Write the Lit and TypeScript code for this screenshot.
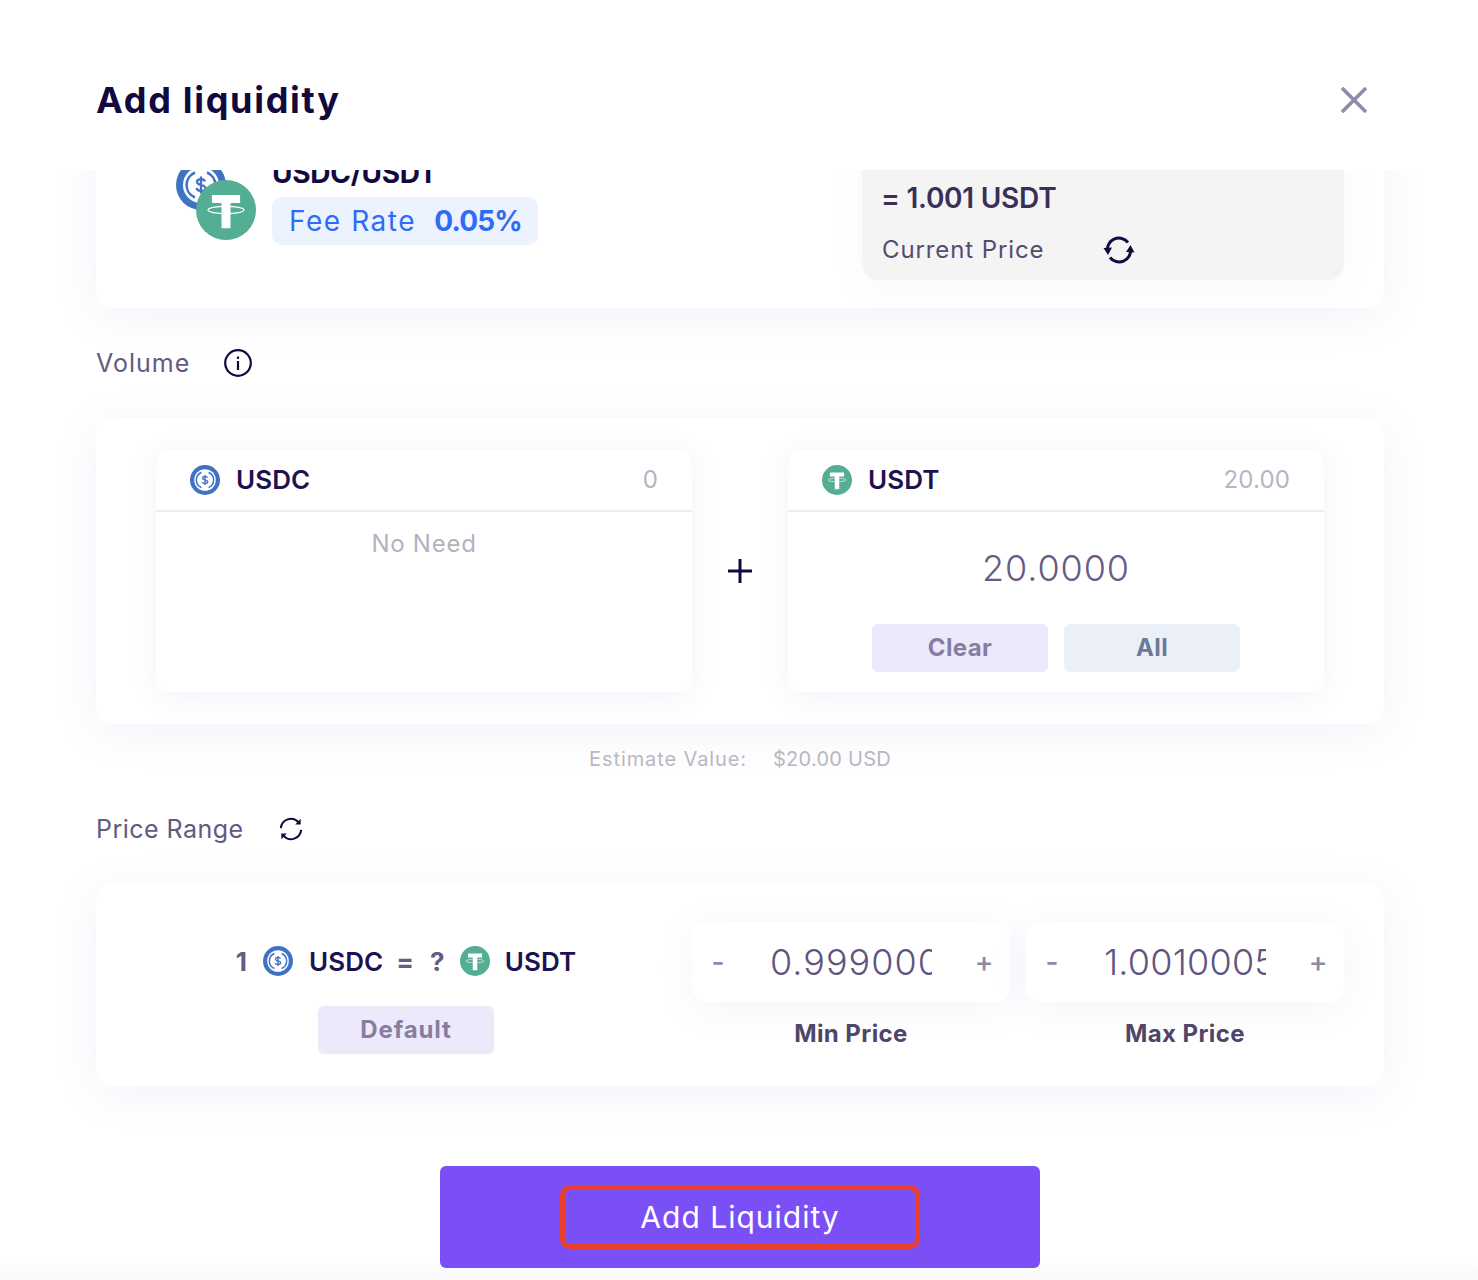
import { LitElement, html, css, svg } from "lit";
import { customElement } from "lit/decorators.js";

const usdc = (size: number) => html`<svg class="logo" width=${size} height=${size} viewBox="0 0 100 100">
  <circle cx="50" cy="50" r="50" fill="#3e73c4"/>
  <circle cx="50" cy="50" r="36" fill="#fff"/>
  <path d="M38 25 A27 27 0 0 0 38 75 M62 25 A27 27 0 0 1 62 75" fill="none" stroke="#3e73c4" stroke-width="5"/>
  <path d="M58 43 C57 39 54 38 50 38 C45 38 42 40 42 44 C42 52 59 48 59 56 C59 60 55 62 50 62 C45 62 42 60 41 56 M50 33 V67" fill="none" stroke="#3e73c4" stroke-width="4.500"/>
</svg>`;

const usdt = (size: number) => html`<svg class="logo" width=${size} height=${size} viewBox="0 0 100 100">
  <circle cx="50" cy="50" r="50" fill="#53ae94"/>
  <path d="M26.500 25 H73.500 V38.500 H57.500 V80.500 H42.500 V38.500 H26.500 Z" fill="#fff"/>
  <ellipse cx="50" cy="50" rx="30" ry="6" fill="none" stroke="#fff" stroke-width="2"/>
</svg>`;

const refreshThick = svg`<svg width="32" height="30" viewBox="0 0 32 30">
  <path d="M4.500 16 A11.500 11.500 0 0 1 25 7.500 M27.500 14 A11.500 11.500 0 0 1 7 22.500" fill="none" stroke="#120a3e" stroke-width="3"/>
  <path d="M0.500 13 L9 12.500 L5 20 Z M23 17 L31.500 17.500 L27.500 10 Z" fill="#120a3e"/>
</svg>`;

const refreshThin = svg`<svg width="24" height="24" viewBox="0 0 26 26">
  <path d="M2 12 A11 11 0 0 1 21 5.500 M24 14 A11 11 0 0 1 5 20.500" fill="none" stroke="#120a3e" stroke-width="2.200"/>
  <path d="M23.500 2 V8 H17.500 Z M2.500 24 V18 H8.500 Z" fill="#120a3e"/>
</svg>`;

const info = svg`<svg width="28" height="28" viewBox="0 0 28 28">
  <circle cx="14" cy="14" r="12.800" fill="none" stroke="#120a3e" stroke-width="2.200"/>
  <rect x="12.900" y="12" width="2.200" height="9" fill="#120a3e"/>
  <rect x="12.900" y="7.500" width="2.200" height="2.400" fill="#120a3e"/>
</svg>`;

@customElement("app-root")
export class AppRoot extends LitElement {
  static styles = css`
    :host {
      display: flex;
      flex-direction: column;
      height: 1280px;
      overflow: hidden;
      font-family: Inter, "Noto Sans", sans-serif;
      background: linear-gradient(to bottom, #fff calc(100% - 22px), #f8f8f8);
      color: #120a3e;
    }
    .logo { display: block; flex: none; }
    .header {
      flex: none;
      height: 170px;
      box-sizing: border-box;
      padding: 30px 110px 0 96px;
      display: flex;
      justify-content: space-between;
      align-items: center;
      background: #fff;
      position: relative;
      z-index: 2;
    }
    .title { font-size: 36px; font-weight: 700; letter-spacing: 1.7px; line-height: 44px; }
    .close { display: block; }
    .body {
      flex: 1;
      overflow: hidden;
      padding: 0 94px 0 96px;
      display: flex;
      flex-direction: column;
    }
    .card {
      flex: none;
      background: #fff;
      border-radius: 16px;
      box-shadow: 0 8px 48px rgba(90, 70, 190, 0.07);
    }
    .pair-card {
      margin-top: -60px;
      height: 198px;
      display: flex;
      justify-content: space-between;
      box-sizing: border-box;
      padding: 0 40px 28px 80px;
    }
    .pair { display: flex; gap: 16px; padding-top: 50px; }
    .pair-logos { position: relative; width: 80px; height: 80px; }
    .pair-logos .a { position: absolute; left: 0; top: 0; }
    .pair-logos .b { position: absolute; left: 20px; top: 20px; }
    .pair-name { font-size: 28px; font-weight: 700; line-height: 34px; letter-spacing: -0.25px; margin-top: -4px; height: 41px; }
    .pill {
      display: flex;
      gap: 18px;
      align-items: center;
      height: 48px;
      width: 266px;
      box-sizing: border-box;
      padding-left: 17px;
      border-radius: 10px;
      background: #ecf3ff;
      color: #2e6bf6;
      font-size: 28px;
      letter-spacing: 1.55px;
      white-space: nowrap;
    }
    .pill b { font-weight: 700; letter-spacing: -0.8px; }
    .price-box {
      width: 482px;
      box-sizing: border-box;
      background: #f4f4f4;
      border-radius: 0 0 16px 16px;
      padding: 54px 20px 14px;
      display: flex;
      flex-direction: column;
      justify-content: flex-end;
      box-shadow: 0 8px 40px rgba(90, 70, 190, 0.04);
    }
    .price-val { font-size: 28px; font-weight: 600; color: #3a2f58; line-height: 32px; letter-spacing: -0.25px; margin-bottom: 20px; margin-left: -1px; }
    .price-sub { display: flex; align-items: center; gap: 58px; font-size: 24px; color: #554c70; line-height: 32px; letter-spacing: 0.9px; }
    .label {
      flex: none;
      display: flex;
      align-items: center;
      height: 28px;
      font-size: 25px;
      color: #625a80;
    }
    .label.vol { margin: 41px 0; gap: 34px; letter-spacing: 1px; }
    .label.rng { margin: 44px 0 41px; gap: 35px; letter-spacing: 0.47px; }
    .vol-card {
      height: 306px;
      box-sizing: border-box;
      padding: 32px 60px;
      display: flex;
      align-items: flex-start;
      justify-content: space-between;
    }
    .token {
      width: 536px;
      height: 242px;
      border-radius: 16px;
      background: #fff;
      box-shadow: 0 4px 32px rgba(90, 70, 190, 0.07);
      display: flex;
      flex-direction: column;
    }
    .token-head {
      flex: none;
      height: 62px;
      box-sizing: border-box;
      border-bottom: 2px solid #eeeeee;
      display: flex;
      align-items: center;
      gap: 16px;
      padding: 0 34px 1px;
    }
    .sym { font-size: 26px; font-weight: 600; color: #1d1250; letter-spacing: 0.05px; }
    .amt { margin-left: auto; font-size: 24px; color: #b8b4c4; letter-spacing: 0.15px; }
    .no-need { text-align: center; font-size: 24px; line-height: 32px; color: #b5b2bf; margin-top: 16px; letter-spacing: 0.75px; }
    .plus { align-self: center; display: block; flex: none; }
    .token-val { text-align: center; font-size: 36px; font-weight: 300; color: #675c86; line-height: 44px; margin-top: 34px; letter-spacing: 0.9px; }
    .btns { display: flex; justify-content: center; gap: 16px; margin-top: 34px; }
    .btn {
      width: 176px;
      height: 48px;
      padding-bottom: 1px;
      box-sizing: border-box;
      display: flex;
      align-items: center;
      justify-content: center;
      border-radius: 6px;
      font-size: 24px;
      font-weight: 700;
      letter-spacing: 0.4px;
    }
    .btn.v { background: #ece9fa; color: #887ca3; }
    .btn.b { background: #ebf0f8; color: #6b7a99; }
    .btn.wide { letter-spacing: 0.9px; }
    .estimate {
      flex: none;
      height: 24px;
      margin-top: 23px;
      display: flex;
      justify-content: center;
      gap: 26px;
      font-size: 20px;
      line-height: 24px;
      color: #b8b8c2;
      letter-spacing: 0.25px;
    }
    .estimate .k { letter-spacing: 0.9px; }
    .range-card {
      height: 202px;
      box-sizing: border-box;
      padding: 38px 40px 0;
      display: flex;
      gap: 16px;
    }
    .range-left { width: 540px; display: flex; flex-direction: column; align-items: center; }
    .rate {
      height: 78px;
      margin-bottom: 6px;
      display: flex;
      align-items: center;
      font-size: 26px;
      font-weight: 600;
      color: #1d1250;
      letter-spacing: 0.1px;
    }
    .rate .m { color: #655b84; font-weight: 700; }
    .rate .g13 { margin-left: 13px; }
    .rate .g15 { margin-left: 15px; }
    .rate .g16 { margin-left: 16px; }
    .range-right { display: flex; gap: 16px; }
    .range-col { width: 318px; display: flex; flex-direction: column; align-items: center; }
    .stepper {
      width: 318px;
      height: 80px;
      box-sizing: border-box;
      padding: 0 16px;
      background: #fff;
      border-radius: 14px;
      box-shadow: 0 6px 40px rgba(90, 70, 190, 0.06);
      display: flex;
      align-items: center;
      justify-content: space-between;
    }
    .sign { width: 20px; text-align: center; font-size: 28px; font-weight: 500; color: #8f88a8; line-height: 32px; }
    .num {
      width: 162px;
      overflow: hidden;
      white-space: nowrap;
      font-size: 36px;
      font-weight: 300;
      color: #5f5580;
      line-height: 44px;
      letter-spacing: 0.2px;
    }
    .num.spread { letter-spacing: 1px; }
    .cap { margin-top: 17px; font-size: 24px; font-weight: 700; color: #4f4568; line-height: 30px; letter-spacing: 0.42px; }
    .submit {
      flex: none;
      align-self: center;
      margin-top: 80px;
      width: 600px;
      height: 102px;
      border-radius: 6px;
      background: #7b4ff6;
      display: flex;
      align-items: center;
      justify-content: center;
    }
    .submit-mark {
      width: 360px;
      height: 64px;
      box-sizing: border-box;
      border: 5px solid #e8402a;
      border-radius: 10px;
      display: flex;
      align-items: center;
      justify-content: center;
      color: #fff;
      font-size: 30px;
      letter-spacing: 1px;
    }
  `;

  render() {
    return html`
      <div class="header">
        <div class="title">Add liquidity</div>
        <svg class="close" width="28" height="28" viewBox="0 0 28 28">
          <path d="M2 2 L26 26 M26 2 L2 26" stroke="#9189ac" stroke-width="3.600" fill="none"/>
        </svg>
      </div>
      <div class="body">
        <div class="card pair-card">
          <div class="pair">
            <div class="pair-logos">
              <span class="a">${usdc(50)}</span>
              <span class="b">${usdt(60)}</span>
            </div>
            <div>
              <div class="pair-name">USDC/USDT</div>
              <div class="pill"><span>Fee Rate</span><b>0.05%</b></div>
            </div>
          </div>
          <div class="price-box">
            <div class="price-val">= 1.001 USDT</div>
            <div class="price-sub"><span>Current Price</span>${refreshThick}</div>
          </div>
        </div>

        <div class="label vol"><span>Volume</span>${info}</div>

        <div class="card vol-card">
          <div class="token">
            <div class="token-head">${usdc(30)}<span class="sym">USDC</span><span class="amt">0</span></div>
            <div class="no-need">No Need</div>
          </div>
          <svg class="plus" width="26" height="26" viewBox="0 0 26 26">
            <path d="M13 1 V25 M1 13 H25" stroke="#120a3e" stroke-width="3" fill="none"/>
          </svg>
          <div class="token">
            <div class="token-head">${usdt(30)}<span class="sym">USDT</span><span class="amt">20.00</span></div>
            <div class="token-val">20.0000</div>
            <div class="btns">
              <div class="btn v">Clear</div>
              <div class="btn b">All</div>
            </div>
          </div>
        </div>

        <div class="estimate"><span class="k">Estimate Value:</span><span>$20.00 USD</span></div>

        <div class="label rng"><span>Price Range</span>${refreshThin}</div>

        <div class="card range-card">
          <div class="range-left">
            <div class="rate">
              <span class="m">1</span>
              <span class="g16">${usdc(30)}</span>
              <span class="g16">USDC</span>
              <span class="m g13">=</span>
              <span class="m g16">?</span>
              <span class="g15">${usdt(30)}</span>
              <span class="g15">USDT</span>
            </div>
            <div class="btn v wide">Default</div>
          </div>
          <div class="range-right">
            <div class="range-col">
              <div class="stepper"><span class="sign">-</span><div class="num spread">0.9990005</div><span class="sign">+</span></div>
              <div class="cap">Min Price</div>
            </div>
            <div class="range-col">
              <div class="stepper"><span class="sign">-</span><div class="num">1.0010005</div><span class="sign">+</span></div>
              <div class="cap">Max Price</div>
            </div>
          </div>
        </div>

        <div class="submit"><div class="submit-mark">Add Liquidity</div></div>
      </div>
    `;
  }
}
